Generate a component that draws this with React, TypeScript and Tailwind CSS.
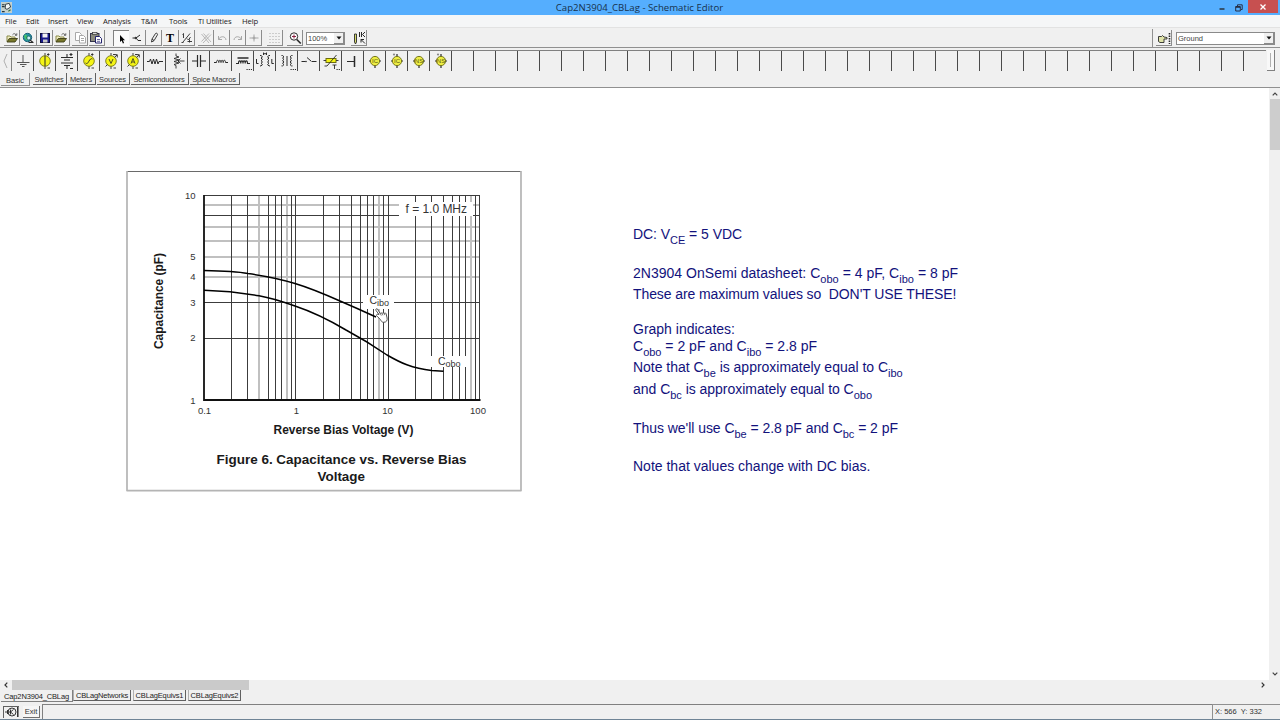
import type { ReactNode } from "react";

const K = "#2a2a2a";
const G = "#a8a8a8";
const Y = "#f4f416";

function Icon({ children, w = 16, h = 16 }: { children: ReactNode; w?: number; h?: number }) {
  return (
    <svg width={w} height={h} viewBox={`0 0 ${w} ${h}`} fill="none" stroke={K} strokeWidth="1" className="block shrink-0">
      {children}
    </svg>
  );
}

function ToolButton({ children, pressed }: { children: ReactNode; pressed?: boolean }) {
  return (
    <div
      className={
        pressed
          ? "flex h-4 w-4 shrink-0 items-center justify-center border-t border-l border-[#808080] bg-[#fafafa]"
          : "flex h-4 w-4 shrink-0 items-center justify-center border-r border-b border-[#8c8c8c] bg-[#f2f2f2]"
      }
    >
      {children}
    </div>
  );
}

const OpenIcon = () => (
  <Icon>
    <path d="M3 11.5V6h3l1 1h4v1.500" fill="#f0edc0" stroke="#8a8a4a" />
    <path d="M3 12l2.300-3.500H13.500l-2.500 3.500z" fill="#77772a" stroke="#3c3c14" strokeWidth=".9" />
    <path d="M8.500 4.800c1-1.500 3-1.500 3.600.2M12.800 3.300v2h-1.800" stroke="#444" strokeWidth=".8" />
  </Icon>
);
const GlobeIcon = () => (
  <Icon>
    <circle cx="7.500" cy="7.500" r="4.200" fill="#2492a0" stroke="#1b617a" />
    <path d="M5 5c2 0 1 2 3 2s0 3-1 3-1-2-2-2z" stroke="#58d06a" fill="#2fae5a" />
    <circle cx="8.800" cy="8" r="2" fill="#c8f0f0" stroke="#175a6a" strokeWidth=".8" />
    <path d="M10 10l3 2.500M8.500 12.500h5" stroke={K} strokeWidth="1.100" />
  </Icon>
);
const SaveIcon = () => (
  <Icon>
    <rect x="3.500" y="3.500" width="9" height="9" fill="#1a1a8c" stroke="#0a0a3c" />
    <rect x="5.500" y="3.500" width="5" height="4" fill="#f2f2f2" stroke="none" />
    <rect x="6" y="9.500" width="4.500" height="3" fill="#c8c8c8" stroke="none" />
  </Icon>
);
const CopyIcon = () => (
  <Icon>
    <path d="M3.500 2.500h4l2 2v6h-6z" fill="#fff" stroke={G} />
    <path d="M7.500 5.500h4l2 2v5.500h-6z" fill="#fff" stroke={G} />
    <path d="M9 8.500h3M9 10.500h3" stroke={G} />
  </Icon>
);
const PasteIcon = () => (
  <Icon>
    <rect x="2.500" y="3.500" width="8.500" height="8" fill="#8a8a7c" stroke="#34344a" />
    <rect x="4.500" y="2.500" width="4.500" height="2" fill="#d8d8d8" stroke="#333" strokeWidth=".7" />
    <path d="M7.500 6.500h4l2 2v4.500h-6z" fill="#fff" stroke="#23236e" />
    <path d="M9 9.500h3M9 11.300h3" stroke="#23236e" strokeWidth=".7" />
  </Icon>
);
const PointerIcon = () => (
  <Icon>
    <path d="M6 4v7l1.700-1.500 1.200 3 1.200-.5-1.200-2.800H11z" fill="#000" stroke="none" />
  </Icon>
);
const WireIcon = () => (
  <Icon>
    <path d="M3.500 8h3.500l4-3M7.500 8.500l1.500 2H12" />
    <circle cx="6.800" cy="8" r=".8" fill={K} />
  </Icon>
);
const PencilIcon = () => (
  <Icon>
    <path d="M5.500 12l.5-3 3.500-5.500c1-.8 2.300 0 2 1.200L8 10.700zM6 9l2 1.500" strokeWidth=".9" />
  </Icon>
);
const TextIcon = () => <span className="font-['Liberation_Serif',serif] text-[12px] leading-none font-bold text-black">T</span>;
const FracIcon = () => (
  <Icon>
    <path d="M4.500 3.500v4.500M3.500 4.500l1-1M4 12l7-8.500M2.500 12.500h2M8 8.500l1.500 1.500 2-3M8.500 11.500h4.500M10.500 9.500v3" strokeWidth=".9" />
  </Icon>
);
const CrossIcon = () => (
  <Icon>
    <path d="M3.500 4l7.500 9M5.500 3.500l7.500 8.500M11 3.500L3.500 11.500M13 4.500L5 13" stroke={G} strokeWidth=".8" />
  </Icon>
);
const UndoIcon = () => (
  <Icon>
    <path d="M4.500 6v3.500H8M4.500 9.500C6 6 11.500 5.500 12 10" stroke={G} />
  </Icon>
);
const RedoIcon = () => (
  <Icon>
    <path d="M11.500 6v3.500H8M11.500 9.500C10 6 4.500 5.500 4 10" stroke={G} />
  </Icon>
);
const PlusIcon = () => (
  <Icon>
    <path d="M3.500 8h9M8 4.500v7" stroke={G} />
    <circle cx="8" cy="8" r="1" fill={G} stroke={G} />
  </Icon>
);
const GridIcon = () => (
  <Icon>
    <path d="M2.500 3.500h12M2.500 6.500h12M2.500 9.500h12M2.500 12.500h12" stroke={G} strokeDasharray="1 2" />
  </Icon>
);
const ZoomIcon = () => (
  <Icon>
    <circle cx="7" cy="6.500" r="3.700" fill="#fff" />
    <path d="M5 6.500h4M7 4.500v4" stroke="#8a2040" />
    <path d="M9.800 9.500l4 4" strokeWidth="1.700" />
  </Icon>
);
const ProbeIcon = () => (
  <Icon>
    <path d="M3.500 4v8l1 2 1-2V4z" fill="#d6dc6a" strokeWidth=".9" />
    <path d="M8.500 2v5M10.500 2v5M14 2l-2.500 2.500L14 7M10 9.500l4 4M10 12.500v-3h3" />
  </Icon>
);
const HandIcon = () => (
  <Icon>
    <path d="M2.500 6.500h3l1-1 1.500 1.500 3 .5v1.500H8v3.500H4l-1.500-1z" fill="#dfe3a8" strokeWidth=".9" />
    <path d="M13.500 3v11" strokeWidth="1.600" strokeDasharray="1.500 1" />
  </Icon>
);

function Source({ mark, arrow }: { mark: ReactNode; arrow?: boolean }) {
  return (
    <Icon w={20} h={20}>
      <path d="M10 2v3M10 15v3M12 3.500h2.500M12.500 17h2.500" strokeWidth=".9" />
      {!arrow && <path d="M13.300 2.300v2.500" strokeWidth=".9" />}
      <circle cx="10" cy="10" r="5.300" fill={Y} stroke="#77771a" strokeWidth=".9" />
      {mark}
      {arrow && <path d="M4.500 15.500l2-2M13.500 6.500L16 4M16.300 6.500V3.700h-2.800" strokeWidth=".9" />}
    </Icon>
  );
}

function Chip({ label, dot }: { label: string; dot?: boolean }) {
  return (
    <Icon w={20} h={20}>
      <path d={dot ? "M10 3v3M10 14v3M4 10h2M14 10h2" : "M10 14v3M4 10h2M14 10h2"} strokeWidth="1.200" />
      {dot && <circle cx="7" cy="3.500" r="1.100" fill="#888" stroke="none" />}
      <circle cx="10" cy="10" r="4.600" fill="#eeee44" stroke="#77771a" />
      <text x="10" y="12.200" textAnchor="middle" fontSize="6" fontFamily="Liberation Sans, sans-serif" fill="#55550f" stroke="none">
        {label}
      </text>
    </Icon>
  );
}

const PARTS: ReactNode[] = [
  <Icon w={20} h={20}>
    <path d="M10 4v7M4 11.500h12.500M7 13.500h6.500M9 15.500h2.500" stroke="#555" />
  </Icon>,
  <Source mark={<path d="M10 5v10" />} />,
  <Icon w={20} h={20}>
    <path d="M10 3v3M4 6.500h12M7 9h6M4 12h12M7 14.500h6M10 15v3M12.500 3.500h3M14 2v3M13 17.500h3" strokeWidth="1.100" />
  </Icon>,
  <Source mark={<path d="M6.500 12c2 1.500 2.500-.5 3.500-2s2-3 3.500-2" strokeWidth=".9" />} />,
  <Source arrow mark={<path d="M8 8l2 4.500 2-4.500" strokeWidth=".8" />} />,
  <Source arrow mark={<path d="M8 12.500l2-5 2 5M8.800 11h2.400" strokeWidth=".8" />} />,
  <Icon w={20} h={20}>
    <path d="M2 10.500h2.500l1-2.500 1.500 5 1.500-5 1.500 5 1.500-5 1.500 5 1-2.500H18" />
  </Icon>,
  <Icon w={20} h={20}>
    <path d="M9 2.500V5l3 1-5 1.500 5 1.500-5 1.500 5 1.500-5 1.500 2 1v3M11 10h6.500M13.500 7.500L11 10l2.500 2.500" strokeWidth=".9" />
  </Icon>,
  <Icon w={20} h={20}>
    <path d="M3 10h5.500M11.500 10H17" />
    <path d="M8.500 4v12M11.500 4v12" strokeWidth="1.200" />
  </Icon>,
  <Icon w={20} h={20}>
    <path d="M3 11.500h2.500c0-3 2.300-3 2.300 0c0-3 2.200-3 2.200 0c0-3 2.200-3 2.200 0c0-3 2.300-3 2.300 0H17" />
  </Icon>,
  <Icon w={20} h={20}>
    <path d="M4.500 7h11" strokeWidth="1.500" />
    <path d="M3 12.500h2.500c0-3.500 2.300-3.500 2.300 0c0-3.500 2.200-3.500 2.200 0c0-3.500 2.200-3.500 2.200 0c0-3.500 2.300-3.500 2.300 0H17" strokeWidth="1.100" />
    <path d="M13.500 18.500h5.500" strokeDasharray="1.200 1" />
  </Icon>,
  <Icon w={20} h={20}>
    <path d="M5 4.500h1q3 1.300 0 2.600q3 1.300 0 2.600q3 1.300 0 2.600q3 1.300 0 2.600H5M15 4.500h-1q-3 1.300 0 2.600q-3 1.300 0 2.600q-3 1.300 0 2.600q-3 1.300 0 2.600h1M1.500 8v4.500h2M16.800 8v4.500h2M8.500 4V1.800l1.500 1.400 1.500-1.400V4" />
  </Icon>,
  <Icon w={20} h={20}>
    <path d="M4.500 4.500h1q3 1.300 0 2.600q3 1.300 0 2.600q3 1.300 0 2.600q3 1.300 0 2.600h-1M15.500 4.500h-1q-3 1.300 0 2.600q-3 1.300 0 2.600q-3 1.300 0 2.600q-3 1.300 0 2.600h1M10 5v10" />
    <path d="M13.500 18.500h5.500" strokeDasharray="1.200 1" />
  </Icon>,
  <Icon w={20} h={20}>
    <path d="M2.500 10.500H6.500M8 6.500l4.500 4M13 10.500h4.500" />
    <circle cx="7" cy="10.500" r=".8" fill={K} stroke="none" />
  </Icon>,
  <Icon w={20} h={20}>
    <rect x="5" y="7.500" width="10" height="4" fill={Y} stroke="#6c6c10" />
    <path d="M2.500 9.500h2.500M15 9.500h2.500M3.500 15H6L15.500 4M11.500 14h4M13.500 14v4" strokeWidth=".9" />
    <path d="M15.500 18.500h3.500" strokeDasharray="1.200 1" />
  </Icon>,
  <Icon w={20} h={20}>
    <path d="M4 10.500h7" />
    <path d="M11.500 5v11" strokeWidth="1.500" />
  </Icon>,
  <Chip label="IC" />,
  <Chip label="IC" dot />,
  <Chip label="NS" />,
  <Chip label="NS" dot />,
];

const MENU: [string, string][] = [
  ["File", "w-[21px]"],
  ["Edit", "w-[22px]"],
  ["Insert", "w-[29px]"],
  ["View", "w-[26px]"],
  ["Analysis", "w-[38px]"],
  ["T&M", "w-[28px]"],
  ["Tools", "w-[29px]"],
  ["TI Utilities", "w-[44px]"],
  ["Help", "w-[30px]"],
];

const PART_TABS: [string, string][] = [
  ["Switches", "w-[34px] tracking-[-0.1px]"],
  ["Meters", "w-[28px] tracking-[-0.15px]"],
  ["Sources", "w-[33px] tracking-[-0.1px]"],
  ["Semiconductors", "w-[58px] tracking-[-0.2px]"],
  ["Spice Macros", "w-[50px] tracking-[-0.15px]"],
];

const SHEET_TABS: [string, string][] = [
  ["CBLagNetworks", "w-[58px] tracking-[-0.15px]"],
  ["CBLagEquivs1", "w-[53px] tracking-[-0.15px]"],
  ["CBLagEquivs2", "w-[53px] tracking-[-0.15px]"],
];

const V_DARK = [231.5, 247.5, 268.5, 275.5, 281.5, 291.5, 295.5, 323.5, 339.5, 351.5, 360.5, 367.5, 373.5, 383.5, 388.5, 415.5, 431.5, 443.5, 452.5, 459.5, 465.5, 475.5, 479.5];
const V_SOFT = [259, 287, 379, 471];
const H_DARK = [195.5, 215.5, 302.5, 338.5];
const H_SOFT = [205, 227, 241, 257, 277];

function Chart() {
  return (
    <svg width="396" height="322" viewBox="126 170 396 322" className="block shrink-0" fontFamily="Liberation Sans, Arial, sans-serif">
      <path d="M127 171.500H521" stroke="#6a6a6a" />
      <path d="M127 171V491M521 171V491M126.500 490.700H521.500" stroke="#b4b4b4" strokeWidth="1.700" fill="none" />
      <g stroke="#c0c0c0" strokeWidth="2">
        {V_SOFT.map((x) => <path key={x} d={`M${x} 195V400`} />)}
        {H_SOFT.map((y) => <path key={y} d={`M204 ${y}H480`} />)}
      </g>
      <g stroke="#3c3c3c">
        {V_DARK.map((x) => <path key={x} d={`M${x} 195V400`} />)}
        {H_DARK.map((y) => <path key={y} d={`M204 ${y}H480`} />)}
      </g>
      <rect x="399" y="202" width="74" height="14" fill="#fff" />
      <rect x="363" y="295" width="31" height="14" fill="#fff" />
      <rect x="430" y="356" width="37" height="11" fill="#fff" />
      <path d="M204 195V400H480.500" stroke="#111" strokeWidth="1.800" fill="none" />
      <g stroke="#000" strokeWidth="1.500" fill="none">
        <path d="M204 270.500C222 270.800 240 272 248 273.500C262 275.500 278 278 295 283.500C310 288 322 293 340 301C354 307 364 311.500 376 317" />
        <path d="M204 290.300C222 290.800 240 292.500 259 295.700C272 298 284 302 295 306C310 311 330 320.500 346 330C360 337.500 374 346 387 355C400 362.500 412 368.500 431.500 370.500L443.500 371.300" />
      </g>
      <g fontSize="9.500" fill="#333" textAnchor="end">
        <text x="195.500" y="198.500">10</text>
        <text x="195.500" y="259.500">5</text>
        <text x="195.500" y="279.500">4</text>
        <text x="195.500" y="305.500">3</text>
        <text x="195.500" y="341">2</text>
        <text x="195.500" y="404">1</text>
      </g>
      <g fontSize="9.500" fill="#333" textAnchor="middle">
        <text x="204.500" y="414">0.1</text>
        <text x="296.500" y="414">1</text>
        <text x="387.500" y="414">10</text>
        <text x="478" y="414">100</text>
      </g>
      <text x="405.500" y="213" fontSize="12" textLength="61.500" fill="#333">f = 1.0 MHz</text>
      <text x="369.500" y="303.500" fontSize="10.500" fill="#333">C<tspan fontSize="9" dy="2">ibo</tspan></text>
      <text x="438" y="365" fontSize="10.500" fill="#333">C<tspan fontSize="9" dy="2">obo</tspan></text>
      <g fontWeight="bold" fill="#1a1a1a">
        <text transform="translate(162.500 349) rotate(-90)" fontSize="12.300" textLength="96" lengthAdjust="spacingAndGlyphs">Capacitance (pF)</text>
        <text x="273.500" y="434" fontSize="12.300" textLength="140" lengthAdjust="spacingAndGlyphs">Reverse Bias Voltage (V)</text>
        <text x="216.500" y="464" fontSize="13.300" textLength="250" lengthAdjust="spacingAndGlyphs">Figure 6. Capacitance vs. Reverse Bias</text>
        <text x="317.500" y="480.500" fontSize="13.300" textLength="47.500" lengthAdjust="spacingAndGlyphs">Voltage</text>
      </g>
      <path d="M377.500 309c-1.200-.8-2.200.4-1.500 1.500l3 4-1.200-.3c-1.400-.2-1.800 1.300-.8 1.900l3.500 3.600c.8 1.400 1.300 2.600 3.200 2.600 2.600 0 3.900-1.800 3.400-4.300l-1-4.300c-.6-1.200-1.700-1-1.900-.2-.5-1-1.800-1-2.100 0-.6-.9-1.700-.7-1.900.1z" fill="#fff" stroke="#444" strokeWidth=".9" />
      <path d="M380.300 313.600l1 2M382.200 313.500l.7 1.800M384.300 313.500l.4 1.600" stroke="#444" strokeWidth=".7" />
    </svg>
  );
}

const Sub = ({ children }: { children: ReactNode }) => <span className="relative top-[5px] text-[11px]">{children}</span>;

function Notes() {
  return (
    <div className="flex flex-col text-[14px] leading-[17px] whitespace-pre text-[#12127c]">
      <div className="h-[39px] tracking-[-0.05px]">DC: V<Sub>CE</Sub> = 5 VDC</div>
      <div className="h-[21px] tracking-[0.02px]">2N3904 OnSemi datasheet: C<Sub>obo</Sub> = 4 pF, C<Sub>ibo</Sub> = 8 pF</div>
      <div className="h-[35px] tracking-[-0.09px]">These are maximum values so  DON'T USE THESE!</div>
      <div className="h-[17px]">Graph indicates:</div>
      <div className="h-[21px]">C<Sub>obo</Sub> = 2 pF and C<Sub>ibo</Sub> = 2.8 pF</div>
      <div className="h-[22px] tracking-[-0.02px]">Note that C<Sub>be</Sub> is approximately equal to C<Sub>ibo</Sub></div>
      <div className="h-[39px] tracking-[-0.03px]">and C<Sub>bc</Sub> is approximately equal to C<Sub>obo</Sub></div>
      <div className="h-[38px] tracking-[-0.05px]">Thus we'll use C<Sub>be</Sub> = 2.8 pF and C<Sub>bc</Sub> = 2 pF</div>
      <div className="h-[17px]">Note that values change with DC bias.</div>
    </div>
  );
}

function Combo({ value, width }: { value: string; width: string }) {
  return (
    <div className={`flex h-[13px] shrink-0 items-center justify-between border border-[#8a8a8a] bg-white pl-px text-[7.5px] leading-none text-[#444] ${width}`}>
      <span className="pt-px">{value}</span>
      <span className="flex h-full w-[10px] items-center justify-center border-r border-b border-[#8a8a8a] bg-[#f0f0f0]">
        <svg width="6" height="4" className="block"><path d="M.5 .5h5L3 3.500z" fill="#111" /></svg>
      </span>
    </div>
  );
}

function TitleBar() {
  return (
    <header className="flex h-[15px] shrink-0 bg-[#55aefe]">
      <div className="flex w-[20px] items-center pl-px">
        <svg width="11" height="11" viewBox="0 0 12 12" className="block">
          <rect width="12" height="12" fill="#c4d0cc" />
          <path d="M1 3h3M1 5h3M1 10.500h3" stroke="#26333a" strokeWidth="1.200" />
          <path d="M5 2.500l4-1 1.500 4-4 2.500-2-1z" stroke="#26333a" fill="#f4f8f8" strokeWidth="1" />
          <path d="M8 10l2.500-1.500" stroke="#3a6a3a" strokeWidth="1.200" />
        </svg>
      </div>
      <div className="flex flex-1 items-center justify-center pl-[46px] font-['Open_Sans',sans-serif] text-[9.65px] leading-none text-[#17324d]">
        Cap2N3904_CBLag - Schematic Editor
      </div>
      <div className="flex w-[17px] items-center justify-center">
        <svg width="6" height="12" className="block"><path d="M.5 7h5" stroke="#222" strokeWidth="1.300" /></svg>
      </div>
      <div className="flex w-[18px] items-center justify-center">
        <svg width="8" height="8" fill="none" stroke="#223" className="block"><path d="M2.500 2V.8h4.700v4.700H6M.7 2.500h4.600v4.500H.7zM.7 3.300h4.600" strokeWidth=".9" /></svg>
      </div>
      <div className="flex h-[13px] w-[30px] items-center justify-center bg-[#c75050]">
        <svg width="6" height="6" className="block"><path d="M.5 .5l5 5M5.500 .5l-5 5" stroke="#fff" strokeWidth="1.300" /></svg>
      </div>
      <div className="w-[2px]" />
    </header>
  );
}

export default function App() {
  return (
    <div className="flex h-[720px] w-[1280px] flex-col overflow-hidden bg-[#f0f0f0] font-['Liberation_Sans',Arial,sans-serif]">
      <TitleBar />
      <nav className="flex h-[13px] shrink-0 items-center border-b border-[#e2e2e2] bg-[#f5f6f7] pt-[2px] pl-[5px] font-['Open_Sans',sans-serif] text-[7.7px] leading-none tracking-[-0.15px] whitespace-nowrap text-[#222]">
        {MENU.map(([label, w]) => (
          <span key={label} className={w}>{label}</span>
        ))}
      </nav>

      <div className="flex h-[20px] shrink-0 items-center border-b border-[#909090] pt-px pl-[4px]">
        <div className="flex w-[68px] gap-[0.6px]">
          <ToolButton><OpenIcon /></ToolButton>
          <ToolButton><GlobeIcon /></ToolButton>
          <ToolButton><SaveIcon /></ToolButton>
          <ToolButton><OpenIcon /></ToolButton>
        </div>
        <div className="flex w-[41px] gap-[0.6px]">
          <ToolButton><CopyIcon /></ToolButton>
          <ToolButton><PasteIcon /></ToolButton>
        </div>
        <div className="flex w-[85px] gap-[0.5px]">
          <ToolButton pressed><PointerIcon /></ToolButton>
          <ToolButton><WireIcon /></ToolButton>
          <ToolButton><PencilIcon /></ToolButton>
          <ToolButton><TextIcon /></ToolButton>
          <ToolButton><FracIcon /></ToolButton>
        </div>
        <div className="flex w-[69px]">
          <ToolButton><CrossIcon /></ToolButton>
          <ToolButton><UndoIcon /></ToolButton>
          <ToolButton><RedoIcon /></ToolButton>
          <ToolButton><PlusIcon /></ToolButton>
        </div>
        <div className="flex w-[20px]"><ToolButton><GridIcon /></ToolButton></div>
        <div className="flex w-[19px]"><ToolButton><ZoomIcon /></ToolButton></div>
        <Combo value="100%" width="w-[39px]" />
        <div className="ml-[6px] flex"><ToolButton><ProbeIcon /></ToolButton></div>
        <div className="ml-auto flex h-full items-center border-l border-[#909090] pl-[3px]">
          <ToolButton><HandIcon /></ToolButton>
        </div>
        <div className="mr-[5px] ml-[4px] flex"><Combo value="Ground" width="w-[99px]" /></div>
      </div>

      <div className="flex h-[25px] shrink-0 items-start pt-[2px]">
        <div className="flex h-[21px] w-[11px] items-center justify-center">
          <svg width="5" height="16" className="block" fill="none" stroke="#b0b0b0"><path d="M4 1L1 8l3 7" /></svg>
        </div>
        <div className="flex h-[21px] w-[1255px] border-t border-l border-[#808080]">
          {Array.from({ length: 57 }, (_, i) => (
            <div key={i} className={`flex h-[20px] w-[22px] shrink-0 items-center justify-center border-r border-[#4a4a4a] ${i === 56 ? "border-r-transparent" : ""}`}>
              {PARTS[i]}
            </div>
          ))}
        </div>
        <div className="ml-px flex h-[21px] w-[8px] items-center justify-center border-r border-b border-[#808080] bg-[#f8f8f8]">
          <div className="h-[14px] w-px bg-[#b0b0b0]" />
        </div>
      </div>

      <div className="flex h-[15px] shrink-0 items-start border-b border-[#909090] pl-px text-[7.5px] leading-none whitespace-nowrap text-[#333]">
        <div className="flex h-[13px] w-[29px] items-center justify-center border-r border-b border-[#909090] pt-[4px] tracking-[-0.1px]">Basic</div>
        <div className="flex gap-px pl-[2.500px]">
          {PART_TABS.map(([label, w]) => (
            <div key={label} className={`flex h-[12px] items-center justify-center border-r border-b border-[#606060] pt-[2px] ${w}`}>{label}</div>
          ))}
        </div>
      </div>

      <div className="flex h-[592px] shrink-0">
        <main className="flex flex-1 items-start bg-white pl-[126px]">
          <div className="pt-[82px]"><Chart /></div>
          <div className="pt-[138px] pl-[111px]"><Notes /></div>
        </main>
        <div className="flex w-[11px] flex-col items-center bg-[#f0f0f0]">
          <div className="flex h-[11px] items-center"><svg width="6" height="4" fill="none" stroke="#444" strokeWidth="1.200" className="block"><path d="M.7 3.300L3 1l2.300 2.300" /></svg></div>
          <div className="h-[51px] w-[10px] bg-[#cdcdcd]" />
          <div className="mt-auto flex h-[13px] items-center"><svg width="6" height="4" fill="none" stroke="#444" strokeWidth="1.200" className="block"><path d="M.7 .7L3 3l2.300-2.300" /></svg></div>
        </div>
      </div>

      <div className="flex h-[10px] shrink-0 items-center">
        <div className="flex w-[12px] justify-center"><svg width="4" height="6" fill="none" stroke="#333" strokeWidth="1.200" className="block"><path d="M3.300 .7L1 3l2.300 2.300" /></svg></div>
        <div className="h-full w-[237px] bg-[#cacaca]" />
        <div className="mr-[15px] ml-auto"><svg width="4" height="6" fill="none" stroke="#333" strokeWidth="1.200" className="block"><path d="M.7 .7L3 3 .7 5.300" /></svg></div>
      </div>

      <div className="flex h-[14px] shrink-0 items-start pl-px text-[7.5px] leading-none whitespace-nowrap text-[#222]">
        <div className="flex h-[12px] w-[72px] items-center justify-center border-r border-b border-[#808080] pt-[2px] tracking-[-0.15px]">Cap2N3904_CBLag</div>
        <div className="flex gap-[2px]">
          {SHEET_TABS.map(([label, w]) => (
            <div key={label} className={`flex h-[11px] items-center justify-center border-r border-b border-l border-r-[#606060] border-b-[#606060] border-l-[#b0b0b0] pt-px ${w}`}>{label}</div>
          ))}
        </div>
      </div>

      <footer className="flex h-[16px] shrink-0 flex-col border-b border-[#6f8496] text-[7.5px] leading-none text-[#333]">
        <div className="flex h-full items-center">
          <div className="ml-[3px] flex h-[12px] w-[16px] items-center justify-center border-t border-l border-[#606060]">
            <svg width="14" height="10" fill="none" stroke="#222" className="block"><circle cx="7" cy="5" r="4" strokeWidth=".9" /><path d="M0 5h5.500M5.500 2.500v5M5.500 5l3-2.500M5.500 5l3 2.500M2.500 3v4" strokeWidth=".9" /><path d="M12.800 0v10" strokeWidth="1.400" /></svg>
          </div>
          <div className="ml-[4px] flex h-[12px] w-[17px] items-center justify-center border-r border-b border-[#707070] bg-[#f6f6f6] pt-px">Exit</div>
          <div className="ml-[2px] h-full w-[1170px] border-t border-l border-[#808080]" />
          <div className="flex h-full flex-1 items-center border-t border-l border-[#909090] pl-[2px] whitespace-pre">X: 566  Y: 332</div>
        </div>
      </footer>
    </div>
  );
}
